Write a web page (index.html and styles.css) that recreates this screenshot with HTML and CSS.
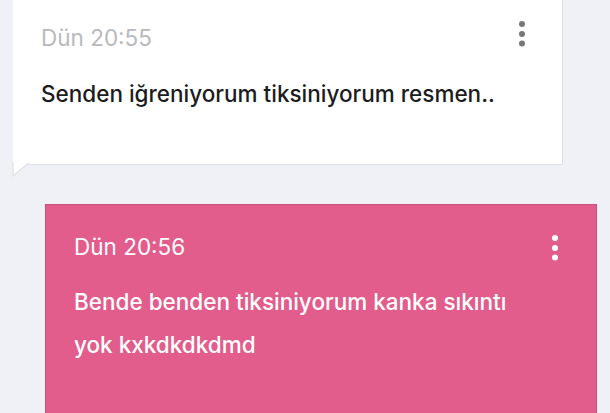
FILE: index.html
```html
<!DOCTYPE html>
<html>
<head>
  <meta charset="UTF-8" />
  <link rel="stylesheet" href="styles.css">
</head>
<body>
  <div class="thread">
    <div class="msg incoming">
      <div class="msg-head">
        <span class="msg-time">Dün 20:55</span>
        <button class="msg-menu" aria-label="Menü">
          <svg width="8" height="28" viewBox="0 0 8 28"><circle cx="4" cy="4" r="3"/><circle cx="4" cy="14" r="3"/><circle cx="4" cy="23.5" r="3"/></svg>
        </button>
      </div>
      <p class="msg-text">Senden iğreniyorum tiksiniyorum resmen..</p>
      <svg class="msg-tail" width="20" height="16" viewBox="0 0 20 16"><path d="M1 0 L1 14 L17 1" fill="#fff" stroke="#dfe0e6" stroke-width="1.2"/><rect x="1.6" y="0" width="18" height="1.2" fill="#fff"/></svg>
    </div>

    <div class="msg outgoing">
      <div class="msg-head">
        <span class="msg-time">Dün 20:56</span>
        <button class="msg-menu" aria-label="Menü">
          <svg width="8" height="28" viewBox="0 0 8 28"><circle cx="4" cy="4" r="3"/><circle cx="4" cy="14" r="3"/><circle cx="4" cy="23.5" r="3"/></svg>
        </button>
      </div>
      <p class="msg-text">Bende benden tiksiniyorum kanka sıkıntı yok kxkdkdkdmd</p>
    </div>
  </div>
</body>
</html>
```

FILE: styles.css
```css
:root {
  --page-bg: #f0f1f6;
  --card-border: #dfe0e6;
  --pink: #e25c8c;
  --pink-border: #c94f7c;
  --text-dark: #1c1c1e;
  --text-muted: #b9b9bd;
}

body {
  margin: 0;
  background: var(--page-bg);
  font-family: 'Inter', 'Roboto', sans-serif;
  overflow: hidden;
}

.thread {
  display: flex;
  flex-direction: column;
  gap: 39px;
  padding: 0 13px;
  margin-top: -4px;
}

.msg {
  position: relative;
  box-sizing: border-box;
  padding: 24px 36px 49px 28px;
}

.msg.incoming {
  margin-right: 34px;
  background: #fff;
  border: 1px solid var(--card-border);
  border-top: none;
  border-left: none;
}

.msg.outgoing {
  margin-left: 32px;
  margin-right: 0;
  background: var(--pink);
  border: 1px solid var(--pink-border);
  padding-left: 28px;
  padding-right: 37px;
  color: #fff;
}

.msg-head {
  display: flex;
  align-items: center;
  justify-content: space-between;
  height: 36px;
}

.msg-time {
  font-size: 22.5px;
  line-height: 36px;
  color: var(--text-muted);
}

.outgoing .msg-time {
  color: #fff;
}

.msg-menu {
  border: none;
  background: none;
  padding: 0;
  display: flex;
  margin-top: -8px;
  fill: #77777b;
}

.outgoing .msg-menu {
  margin-top: 2px;
  fill: #fff;
}

.msg-text {
  margin: 16px 0 0;
  font-size: 22.5px;
  font-weight: 500;
  line-height: 43px;
  color: var(--text-dark);
}

.outgoing .msg-text {
  margin: 15px 30px 0 0;
  color: #fff;
}

.msg-tail {
  position: absolute;
  left: -1px;
  bottom: -14px;
}
```
